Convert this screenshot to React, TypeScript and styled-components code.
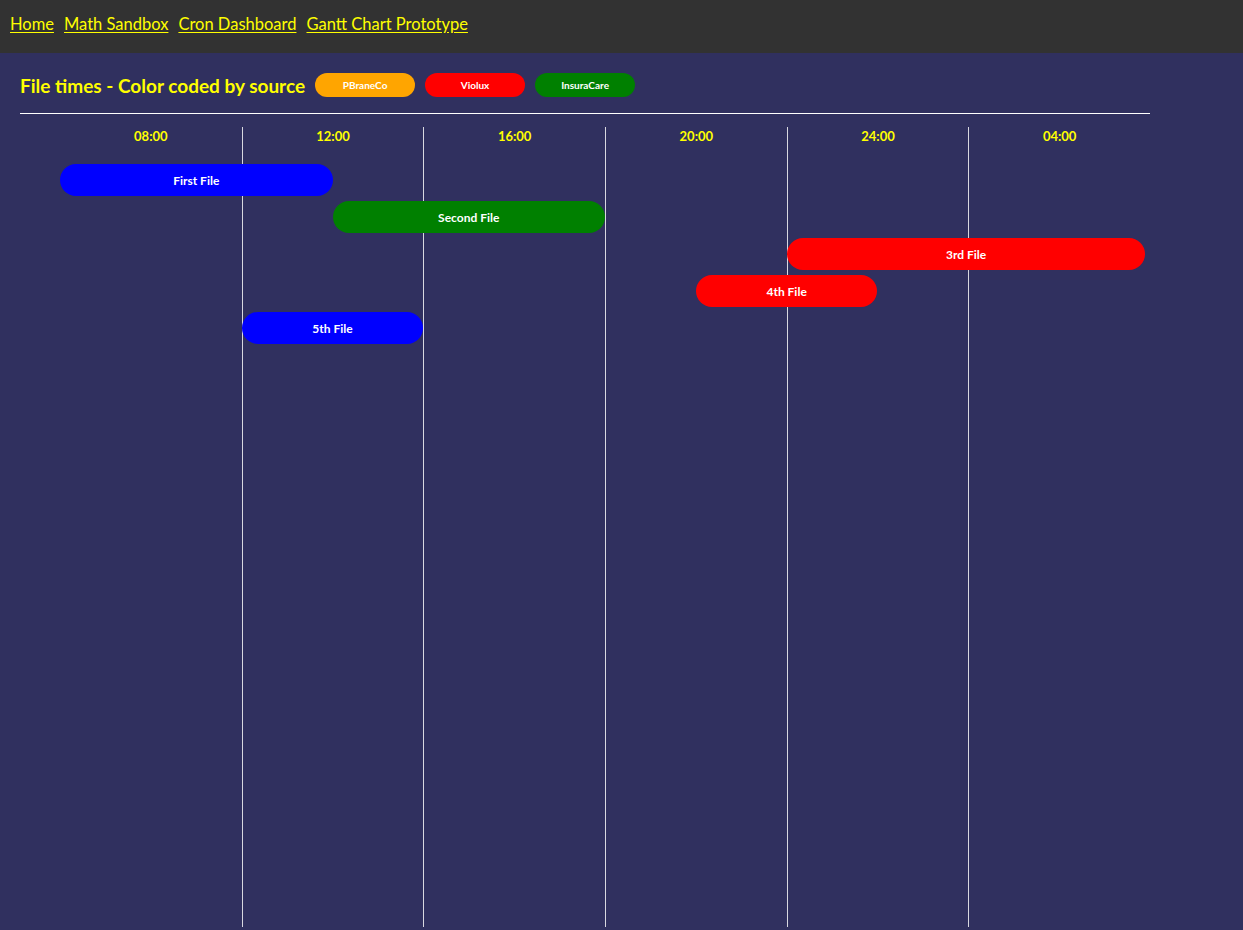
import styled, { createGlobalStyle } from "styled-components"

const GlobalStyle = createGlobalStyle`
  html, body {
    margin: 0;
    padding: 0;
    background: #30305f;
    font-family: Lato, "Noto Sans", sans-serif;
  }
`

const NavBar = styled.nav`
  display: flex;
  align-items: center;
  gap: 10px;
  height: 53px;
  padding: 0 10px 5px;
  box-sizing: border-box;
  background: #323232;
`

const NavLink = styled.a`
  color: #ffff00;
  font-size: 16.5px;
  text-decoration: underline;
  text-underline-offset: 2px;
`

const Main = styled.main`
  padding: 20px 20px 0;
  min-height: 877px;
  box-sizing: border-box;
`

const TitleRow = styled.div`
  display: flex;
  align-items: center;
  gap: 10px;
  height: 24px;
`

const Title = styled.h2`
  margin: 0;
  color: #ffff00;
  font-size: 19px;
  font-weight: 700;
`

const Pill = styled.span<{ $color: string }>`
  display: flex;
  align-items: center;
  justify-content: center;
  width: 100px;
  height: 24px;
  border-radius: 12px;
  background: ${(p) => p.$color};
  color: #fff;
  font-size: 10px;
  font-weight: 700;
`

const Divider = styled.hr`
  width: 1130px;
  margin: 16px 0 13px;
  border: 0;
  border-top: 1px solid #fff;
`

const Chart = styled.div`
  position: relative;
  width: 1090px;
  height: 800px;
  margin-left: 40px;
`

const Columns = styled.div`
  display: grid;
  grid-template-columns: repeat(6, 1fr);
  height: 100%;
`

const Column = styled.div`
  & + & {
    border-left: 1px solid #d8d8e0;
  }
`

const TimeLabel = styled.div`
  padding-top: 1px;
  text-align: center;
  color: #ffff00;
  font-size: 13px;
  font-weight: 700;
`

const Bars = styled.div`
  position: absolute;
  top: 37px;
  left: 0;
  right: 0;
  display: flex;
  flex-direction: column;
  gap: 5px;
`

const Bar = styled.div<{ $color: string }>`
  display: flex;
  align-items: center;
  justify-content: center;
  height: 32px;
  border-radius: 16px;
  background: ${(p) => p.$color};
  color: #fff;
  font-size: 12px;
  font-weight: 700;
`

const sources = [
  { name: "PBraneCo", color: "#ffa500" },
  { name: "Violux", color: "#ff0000" },
  { name: "InsuraCare", color: "#008000" },
]

const times = ["08:00", "12:00", "16:00", "20:00", "24:00", "04:00"]

// start / length in hours, chart covers 24 hours
const files = [
  { name: "First File", start: 0, length: 6, color: "#0000ff" },
  { name: "Second File", start: 6, length: 6, color: "#008000" },
  { name: "3rd File", start: 16, length: 7.9, color: "#ff0000" },
  { name: "4th File", start: 14, length: 4, color: "#ff0000" },
  { name: "5th File", start: 4, length: 4, color: "#0000ff" },
]

const App = () => {
  return (
    <>
      <GlobalStyle />
      <NavBar>
        <NavLink href="#">Home</NavLink>
        <NavLink href="#">Math Sandbox</NavLink>
        <NavLink href="#">Cron Dashboard</NavLink>
        <NavLink href="#">Gantt Chart Prototype</NavLink>
      </NavBar>
      <Main>
        <TitleRow>
          <Title>File times - Color coded by source</Title>
          {sources.map((s) => (
            <Pill key={s.name} $color={s.color}>
              {s.name}
            </Pill>
          ))}
        </TitleRow>
        <Divider />
        <Chart>
          <Columns>
            {times.map((t) => (
              <Column key={t}>
                <TimeLabel>{t}</TimeLabel>
              </Column>
            ))}
          </Columns>
          <Bars>
            {files.map((f) => (
              <Bar
                key={f.name}
                $color={f.color}
                style={{ marginLeft: `${(f.start / 24) * 100}%`, width: `${(f.length / 24) * 100}%` }}
              >
                {f.name}
              </Bar>
            ))}
          </Bars>
        </Chart>
      </Main>
    </>
  )
}

export default App
